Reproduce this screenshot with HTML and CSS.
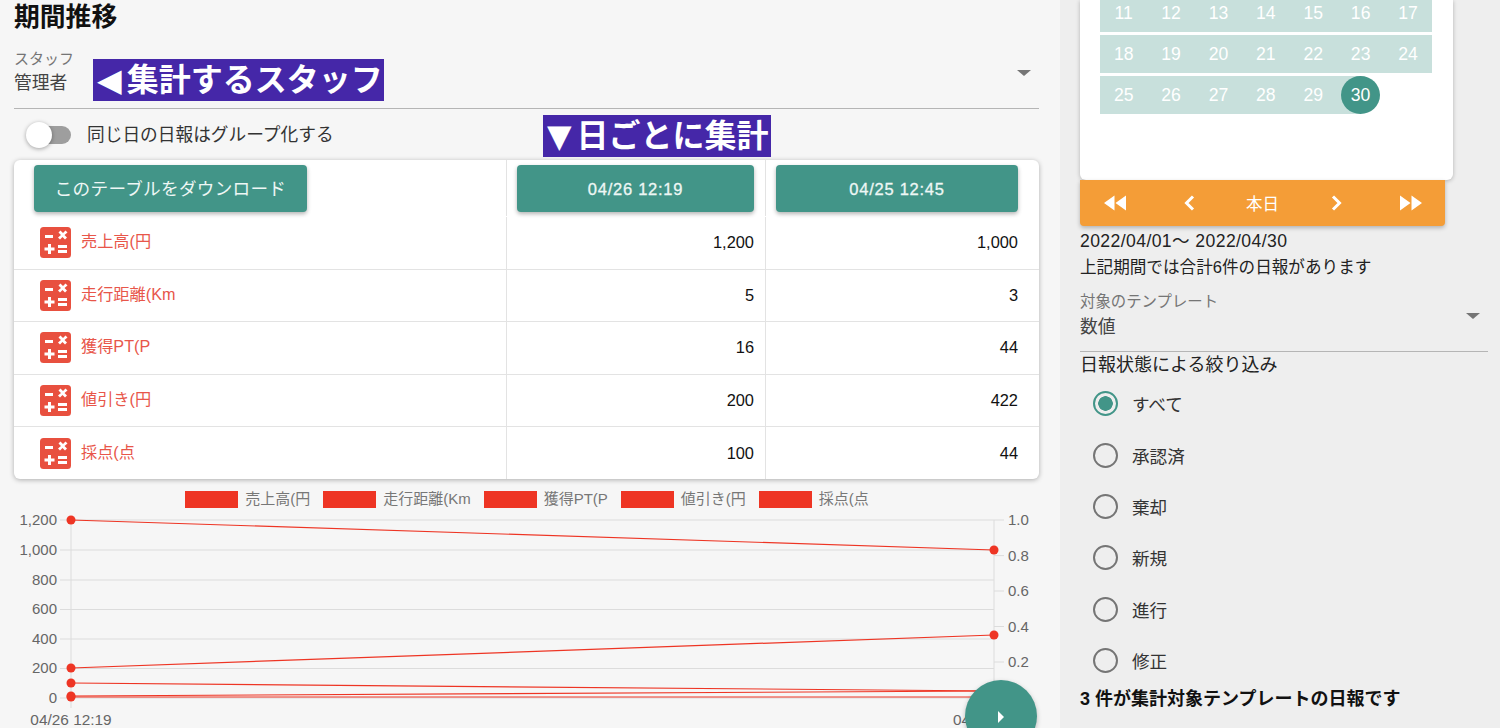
FILE: index.html
```html
<!DOCTYPE html>
<html lang="ja">
<head>
  <meta charset="UTF-8" />
  <meta name="viewport" content="width=device-width, initial-scale=1.0"/>
  <title>期間推移</title>
  <link rel="stylesheet" href="styles.css">
</head>
<body>
  <div class="page">
    <main class="main">
      <h2 class="title">期間推移</h2>

      <div class="select staff-select">
        <div class="select-text">
          <div class="select-label">スタッフ</div>
          <div class="select-value">管理者</div>
        </div>
        <div class="note note-staff"><span class="tri">◀</span>集計するスタッフ</div>
        <span class="arrow"></span>
      </div>

      <div class="group-row">
        <span class="toggle"><span class="toggle-thumb"></span></span>
        <span class="group-label">同じ日の日報はグループ化する</span>
        <div class="note note-day"><span class="tri">▼</span>日ごとに集計</div>
      </div>

      <div class="table-card">
        <div class="row head">
          <div class="cell name"><button class="btn btn-dl">このテーブルをダウンロード</button></div>
          <div class="cell col1"><button class="btn btn-date">04/26 12:19</button></div>
          <div class="cell col2"><button class="btn btn-date">04/25 12:45</button></div>
        </div>
        <div class="row first">
          <div class="cell name"><svg class="calc" viewBox="0 0 31 31"><use href="#calc-icon"/></svg><span>売上高(円</span></div>
          <div class="cell col1">1,200</div>
          <div class="cell col2">1,000</div>
        </div>
        <div class="row">
          <div class="cell name"><svg class="calc" viewBox="0 0 31 31"><use href="#calc-icon"/></svg><span>走行距離(Km</span></div>
          <div class="cell col1">5</div>
          <div class="cell col2">3</div>
        </div>
        <div class="row">
          <div class="cell name"><svg class="calc" viewBox="0 0 31 31"><use href="#calc-icon"/></svg><span>獲得PT(P</span></div>
          <div class="cell col1">16</div>
          <div class="cell col2">44</div>
        </div>
        <div class="row">
          <div class="cell name"><svg class="calc" viewBox="0 0 31 31"><use href="#calc-icon"/></svg><span>値引き(円</span></div>
          <div class="cell col1">200</div>
          <div class="cell col2">422</div>
        </div>
        <div class="row">
          <div class="cell name"><svg class="calc" viewBox="0 0 31 31"><use href="#calc-icon"/></svg><span>採点(点</span></div>
          <div class="cell col1">100</div>
          <div class="cell col2">44</div>
        </div>
      </div>

      <div class="legend">
        <span class="swatch"></span><span>売上高(円</span>
        <span class="swatch"></span><span>走行距離(Km</span>
        <span class="swatch"></span><span>獲得PT(P</span>
        <span class="swatch"></span><span>値引き(円</span>
        <span class="swatch"></span><span>採点(点</span>
      </div>

      <svg class="chart" viewBox="0 510 1060 218">
        <g class="grid">
          <path d="M60 520H994M60 550H994M60 580H994M60 609.500H994M60 639H994M60 668.500H994M60 698H994"/>
          <path d="M71 520V708M994 520V708M994 520H1004M994 555.600H1004M994 591H1004M994 626.500H1004M994 662H1004"/>
        </g>
        <g class="ticks">
          <text x="57" y="525">1,200</text>
          <text x="57" y="555">1,000</text>
          <text x="57" y="585">800</text>
          <text x="57" y="614">600</text>
          <text x="57" y="644">400</text>
          <text x="57" y="673">200</text>
          <text x="57" y="703">0</text>
        </g>
        <g class="ticks-right">
          <text x="1008" y="525">1.0</text>
          <text x="1008" y="561">0.8</text>
          <text x="1008" y="596">0.6</text>
          <text x="1008" y="632">0.4</text>
          <text x="1008" y="667">0.2</text>
        </g>
        <g class="ticks-x">
          <text x="71" y="725">04/26 12:19</text>
          <text x="953" y="725" class="cut">04/25 12:45</text>
        </g>
        <g class="lines">
          <path d="M71 520L994 550"/>
          <path d="M71 668L994 635"/>
          <path d="M71 683L994 691"/>
          <path d="M71 696L994 691"/>
          <path d="M71 697L994 697"/>
        </g>
        <g class="points">
          <circle cx="71" cy="520" r="4.500"/>
          <circle cx="71" cy="668" r="4.500"/>
          <circle cx="71" cy="683" r="4.500"/>
          <circle cx="71" cy="696" r="4.500"/>
          <circle cx="71" cy="697" r="4.500"/>
          <circle cx="994" cy="550" r="4.500"/>
          <circle cx="994" cy="635" r="4.500"/>
        </g>
      </svg>

      <button class="fab"><span class="fab-arrow"></span></button>
    </main>

    <aside class="side">
      <div class="calendar">
        <div class="week">
          <span>11</span><span>12</span><span>13</span><span>14</span><span>15</span><span>16</span><span>17</span>
        </div>
        <div class="week">
          <span>18</span><span>19</span><span>20</span><span>21</span><span>22</span><span>23</span><span>24</span>
        </div>
        <div class="week last">
          <span>25</span><span>26</span><span>27</span><span>28</span><span>29</span><span class="today">30</span>
        </div>
      </div>

      <div class="cal-nav">
        <svg class="nav-icon" viewBox="0 0 24 16"><path d="M11.500 .5v15L1 8zM23 .5v15L12.500 8z"/></svg>
        <svg class="nav-icon" viewBox="0 0 24 16"><path class="chev" d="M16 1.500L9.500 8l6.500 6.500"/></svg>
        <span>本日</span>
        <svg class="nav-icon" viewBox="0 0 24 16"><path class="chev" d="M8 1.500L14.500 8 8 14.500"/></svg>
        <svg class="nav-icon" viewBox="0 0 24 16"><path d="M1 .5v15L11.500 8zM12.500 .5v15L23 8z"/></svg>
      </div>

      <div class="range">2022/04/01〜 2022/04/30</div>
      <div class="range-count">上記期間では合計6件の日報があります</div>

      <div class="select template-select">
        <div class="select-text">
          <div class="select-label">対象のテンプレート</div>
          <div class="select-value">数値</div>
        </div>
        <span class="arrow"></span>
      </div>

      <div class="filter-title">日報状態による絞り込み</div>
      <ul class="radios">
        <li><span class="radio on"></span>すべて</li>
        <li><span class="radio"></span>承認済</li>
        <li><span class="radio"></span>棄却</li>
        <li><span class="radio"></span>新規</li>
        <li><span class="radio"></span>進行</li>
        <li><span class="radio"></span>修正</li>
      </ul>
      <div class="summary">3 件が集計対象テンプレートの日報です</div>
    </aside>
  </div>

  <svg class="defs">
    <symbol id="calc-icon" viewBox="0 0 31 31">
      <rect width="31" height="31" rx="3.500" fill="#e8503f"/>
      <path fill="#fff" d="M5 8h8v3H5zM18.500 5.500l2-2 2.500 2.500 2.500-2.500 2 2L24.500 8l2.500 2.500-2 2-2.500-2.500-2.500 2.500-2-2L21 8zM8 17h3v3.500h3.500v3H11V27H8v-3.500H4.500v-3H8zM18 18h9v3h-9zM18 23h9v3h-9z"/>
    </symbol>
  </svg>
</body>
</html>
```

FILE: styles.css
```css
html, body {
  margin: 0;
  height: 728px;
  overflow: hidden;
}
body {
  font-family: "Liberation Sans", "Noto Sans CJK JP", sans-serif;
  color: #222;
  background-color: #f6f6f6;
}
.page {
  display: flex;
  height: 728px;
}
.main {
  position: relative;
  width: 1060px;
  flex: none;
  overflow: hidden;
}
.side {
  flex: 1;
  padding: 0 12px 0 20px;
  background-color: #eeeeee;
}
.defs {
  display: none;
}

/* left column */
.title {
  margin: 0 0 0 14px;
  height: 48px;
  font-size: 25.800px;
  line-height: 34px;
  font-weight: bold;
  color: #111;
}
.select {
  position: relative;
  display: flex;
  align-items: flex-start;
  border-bottom: 1px solid #b5b5b5;
}
.staff-select {
  height: 61px;
  margin: 0 21px 0 14px;
  box-sizing: border-box;
}
.select-label {
  font-size: 15px;
  line-height: 22px;
  color: #757575;
}
.select-value {
  font-size: 17.800px;
  line-height: 26px;
  color: #444;
}
.arrow {
  position: absolute;
  right: 8px;
  top: 22px;
  border-left: 7px solid transparent;
  border-right: 7px solid transparent;
  border-top: 6px solid #757575;
}
.note {
  padding-left: 4px;
  box-sizing: border-box;
  background-color: #4527a8;
  color: #fff;
  font-size: 32px;
  font-weight: bold;
  line-height: 42px;
  white-space: nowrap;
}
.tri {
  margin-right: 5px;
  font-family: "DejaVu Sans", sans-serif;
  font-weight: normal;
}
.note-staff {
  margin-left: 19px;
  margin-top: 11px;
  width: 291px;
  height: 42px;
  overflow: hidden;
}
.note-day {
  position: absolute;
  left: 529px;
  top: 6px;
  width: 228px;
  height: 42px;
  overflow: hidden;
}
.group-row {
  position: relative;
  display: flex;
  align-items: center;
  height: 51px;
  margin: 0 21px 0 14px;
}
.toggle {
  position: relative;
  display: block;
  width: 42px;
  height: 18px;
  margin-left: 15px;
  border-radius: 9px;
  background-color: #9e9e9e;
}
.toggle-thumb {
  position: absolute;
  left: -3px;
  top: -4px;
  width: 26px;
  height: 26px;
  border-radius: 50%;
  background-color: #fff;
  box-shadow: 0 1px 4px rgba(0,0,0,0.35);
}
.group-label {
  margin-left: 16px;
  margin-top: -3px;
  font-size: 17.700px;
  color: #333;
}

/* table */
.table-card {
  margin: 0 21px 0 14px;
  background: #fff;
  border-radius: 6px;
  box-shadow: 0 1px 5px rgba(0,0,0,0.3);
}
.row {
  display: flex;
  height: 52.600px;
  box-sizing: border-box;
  border-top: 1px solid #e3e3e3;
  font-size: 16.400px;
  color: #111;
}
.row.head {
  height: 56px;
  border-top: none;
}
.row.first {
  border-top-color: transparent;
}
.cell {
  display: flex;
  align-items: center;
  justify-content: flex-end;
  box-sizing: border-box;
}
.cell.name {
  justify-content: flex-start;
  width: 492px;
  padding-left: 26px;
  color: #e8564a;
  font-size: 16.200px;
}
.cell.name span {
  margin-top: -5px;
}
.cell.col1 {
  width: 259px;
  padding-right: 11px;
  border-left: 1px solid #e3e3e3;
}
.cell.col2 {
  flex: 1;
  padding-right: 21px;
  border-left: 1px solid #e3e3e3;
}
.row.head .cell {
  align-items: flex-start;
  padding-top: 5px;
}
.row.head .cell.name {
  padding-left: 20px;
}
.row.head .cell.col1 {
  padding-left: 10px;
}
.row.head .cell.col2 {
  padding-left: 10px;
}
.btn {
  height: 47px;
  border: none;
  border-radius: 4px;
  background-color: #429588;
  color: #eef7f5;
  font-family: inherit;
  box-shadow: 0 2px 4px rgba(0,0,0,0.3);
}
.btn-dl {
  width: 273px;
  padding-bottom: 3px;
  font-size: 17.600px;
  letter-spacing: 0.3px;
}
.btn-date {
  width: 100%;
  padding-top: 2px;
  font-size: 16.500px;
  letter-spacing: 0.75px;
  -webkit-text-stroke: 0.3px #eef7f5;
}
.calc {
  width: 31px;
  height: 31px;
  margin-right: 10px;
}

/* chart */
.legend {
  display: flex;
  justify-content: center;
  align-items: center;
  gap: 7px;
  height: 21px;
  margin-top: 10px;
  padding-right: 12px;
  font-size: 15px;
  line-height: 17px;
  color: #777;
}
.legend span:not(.swatch) {
  margin-top: -2px;
}
.swatch {
  width: 53px;
  height: 17px;
  margin-left: 6px;
  background-color: #ee3524;
}
.chart {
  display: block;
  width: 1060px;
  height: 218px;
}
.chart text {
  font-size: 15px;
  fill: #666;
}
.grid path {
  fill: none;
  stroke: #dcdcdc;
  stroke-width: 1;
}
.ticks text {
  text-anchor: end;
}
.ticks-x text {
  font-size: 15.400px;
  text-anchor: middle;
}
.ticks-x .cut {
  text-anchor: start;
}
.lines path {
  fill: none;
  stroke: #ee3524;
  stroke-width: 1.200;
}
.points circle {
  fill: #ee3524;
}
.fab {
  position: absolute;
  left: 965px;
  top: 680px;
  width: 72px;
  height: 72px;
  padding: 0;
  border: none;
  border-radius: 50%;
  background-color: #429588;
  box-shadow: 0 2px 5px rgba(0,0,0,0.25);
}
.fab-arrow {
  position: absolute;
  left: 33px;
  top: 31px;
  border-top: 6px solid transparent;
  border-bottom: 6px solid transparent;
  border-left: 6px solid #fff;
}

/* right column */
.calendar {
  display: flex;
  flex-direction: column;
  justify-content: flex-end;
  gap: 3px;
  height: 180px;
  padding: 0 21px 66px 20px;
  box-sizing: border-box;
  overflow: hidden;
  background: #fff;
  border-radius: 0 0 6px 6px;
  width: 373px;
  box-shadow: 0 1px 4px rgba(0,0,0,0.25);
}
.week {
  display: flex;
  flex: none;
  height: 38px;
  background-color: #c8e0dc;
  color: #fff;
  font-size: 17.600px;
}
.week.last {
  width: 260px;
}
.week span {
  flex: none;
  width: 47.400px;
  height: 38px;
  line-height: 38px;
  text-align: center;
}
.week .today {
  width: 39px;
  margin-left: 4px;
  border-radius: 50%;
  background-color: #429588;
}
.cal-nav {
  display: grid;
  grid-template-columns: repeat(5, 74px);
  justify-content: center;
  justify-items: center;
  align-items: center;
  width: 365px;
  height: 46px;
  background-color: #f49d37;
  color: #fff;
  font-size: 16.500px;
  border-radius: 0 0 4px 4px;
  box-shadow: 0 2px 4px rgba(0,0,0,0.25);
}
.nav-icon {
  width: 24px;
  height: 16px;
  fill: #fff;
}
.chev {
  fill: none;
  stroke: #fff;
  stroke-width: 3;
}
.range {
  margin-top: 2px;
  font-size: 17.600px;
  line-height: 26px;
  letter-spacing: 0.4px;
}
.range-count {
  margin-top: 1px;
  font-size: 16.600px;
  line-height: 26px;
}
.template-select {
  height: 71px;
  padding-top: 10px;
  width: 408px;
  box-sizing: border-box;
}
.template-select .select-label {
  font-size: 15.400px;
}
.template-select .select-value {
  margin-top: 1px;
}
.template-select .arrow {
  top: 32px;
}
.filter-title {
  font-size: 18px;
  line-height: 26px;
}
.radios {
  list-style: none;
  margin: 0;
  padding: 0 0 0 13px;
}
.radios li {
  display: flex;
  align-items: center;
  height: 51.400px;
  font-size: 17.600px;
  color: #333;
}
.radio {
  box-sizing: border-box;
  width: 25px;
  height: 25px;
  margin-right: 14px;
  border: 2px solid #757575;
  border-radius: 50%;
}
.radio.on {
  border-color: #429588;
  background: radial-gradient(circle, #429588 0 7px, transparent 7.500px);
}
.summary {
  font-size: 18px;
  font-weight: bold;
  line-height: 26px;
  color: #111;
}
```
